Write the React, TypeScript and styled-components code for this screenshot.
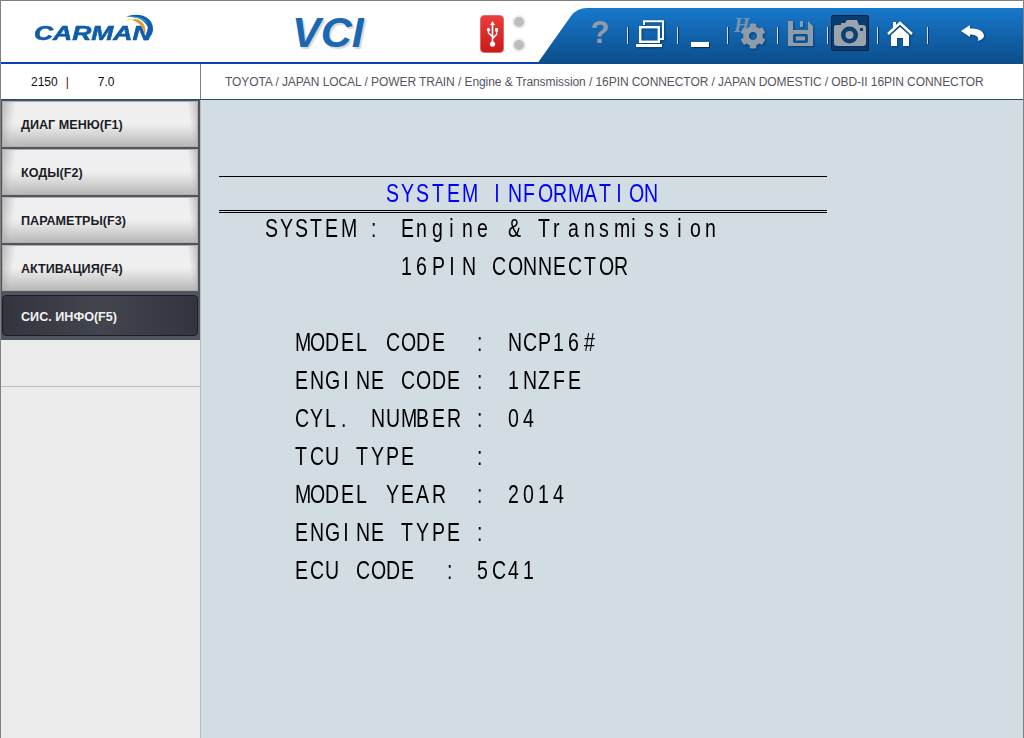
import styled, { createGlobalStyle } from "styled-components";
import { FaCog } from "react-icons/fa";

const GlobalStyle = createGlobalStyle`
  html, body {
    margin: 0;
    padding: 0;
    overflow: hidden;
    background: #fff;
  }
  * {
    box-sizing: border-box;
  }
`;

const Frame = styled.div`
  width: 1024px;
  height: 738px;
  display: flex;
  flex-direction: column;
  border-top: 1px solid #808080;
  border-left: 1px solid #808080;
  border-right: 1px solid #808080;
  font-family: "Liberation Sans", Arial, sans-serif;
`;

const Header = styled.header`
  height: 63px;
  flex: none;
  display: flex;
  align-items: stretch;
  background: #fff;
  border-bottom: 2px solid #0b3fb5;
`;

const Brand = styled.div`
  width: 199px;
  position: relative;
  padding: 23px 0 0 33px;
`;

const BrandName = styled.div`
  font-size: 21px;
  line-height: 17px;
  font-weight: 700;
  font-style: italic;
  color: #0f5cab;
  -webkit-text-stroke: 0.6px #0f5cab;
  transform: scaleX(1.26);
  transform-origin: left center;
`;

const BrandArc = styled.svg`
  position: absolute;
  left: 120px;
  top: 11px;
`;

const VciBox = styled.div`
  width: 280px;
  padding: 13px 0 0 92px;
`;

const VciName = styled.div`
  font-size: 43px;
  line-height: 36px;
  font-weight: 700;
  font-style: italic;
  color: #1a67b5;
  text-shadow: 2px 2px 1px #d8d8d8;
`;

const UsbGroup = styled.div`
  display: flex;
  align-items: center;
  gap: 8px;
  padding-top: 4px;
`;

const UsbBadge = styled.div`
  width: 24px;
  height: 38px;
  border-radius: 4px;
  display: flex;
  align-items: center;
  justify-content: center;
  border: 1px solid #e46a6a;
  background: linear-gradient(#ea3c3c, #cc1a1a);
`;

const Leds = styled.div`
  display: flex;
  flex-direction: column;
  gap: 9px;
`;

const Led = styled.span`
  width: 14px;
  height: 14px;
  border-radius: 50%;
  border: 2px solid #ececec;
  background: #bdbdbd;
`;

const Banner = styled.nav`
  width: 486px;
  height: 56px;
  margin-left: auto;
  align-self: flex-start;
  margin-top: 7px;
  padding: 7px 0 0 44px;
  display: flex;
  align-items: flex-start;
  background: linear-gradient(#1878cb, #0b4d8a);
  clip-path: path("M0 56 L34 8 Q40 0 50 0 H486 V56 Z");
`;

const ToolSlot = styled.div<{ $on?: boolean; $far?: boolean }>`
  width: 38px;
  height: 36px;
  flex: none;
  position: relative;
  display: flex;
  align-items: center;
  justify-content: center;
  margin-left: ${(p) => (p.$far ? "23px" : "0")};
  border-radius: 2px;
  background: ${(p) => (p.$on ? "#0c3b6e" : "transparent")};
  border: 1px solid ${(p) => (p.$on ? "#07233f" : "transparent")};

  svg {
    filter: drop-shadow(1px 1px 1px rgba(4, 40, 80, 0.6));
  }
`;

const ToolSep = styled.span`
  width: 1px;
  height: 17px;
  flex: none;
  margin: 12px 3px 0 8px;
  background: #d5dce2;
  box-shadow: 1px 0 0 #0a3560;
`;

const Question = styled.span`
  font-size: 31px;
  line-height: 36px;
  font-weight: 700;
  color: #8e9ba8;
`;

const MinimizeBar = styled.span`
  width: 18px;
  height: 5px;
  margin-top: 22px;
  background: #fff;
  box-shadow: 1px 1px 1px #06305a;
`;

const GearMark = styled.span`
  display: flex;
  margin: 5px 0 0 5px;
  color: #8e9ba8;
`;

const GearLetter = styled.span`
  position: absolute;
  left: 2px;
  top: 0;
  font-family: "Liberation Serif", serif;
  font-size: 20px;
  line-height: 18px;
  font-weight: 700;
  font-style: italic;
  color: #7a93ac;
`;

const SubBar = styled.div`
  height: 36px;
  flex: none;
  display: flex;
  background: #fff;
  border-bottom: 1px solid #1c4f7c;
`;

const VersionCell = styled.div`
  width: 200px;
  flex: none;
  display: flex;
  align-items: center;
  padding-left: 30px;
  font-size: 12px;
  color: #111;
  border-right: 1px solid #808080;
`;

const VersionBar = styled.span`
  margin: 0 29px 0 8px;
  color: #6b0000;
`;

const Breadcrumb = styled.div`
  padding-left: 24px;
  display: flex;
  align-items: center;
  font-size: 12px;
  letter-spacing: -0.07px;
  color: #555560;
  white-space: nowrap;
`;

const Body = styled.div`
  flex: 1;
  min-height: 0;
  display: flex;
`;

const Sidebar = styled.aside`
  width: 200px;
  flex: none;
  display: flex;
  flex-direction: column;
  background: #ebebeb;
  border-right: 1px solid #bcbcbc;
`;

const MenuGroup = styled.div`
  width: 199px;
  padding: 1px 0 4px 1px;
  display: flex;
  flex-direction: column;
  gap: 2px;
  background: #50545f;
`;

const MenuButton = styled.button<{ $active?: boolean }>`
  width: 196px;
  height: ${(p) => (p.$active ? "41px" : "46px")};
  margin-top: ${(p) => (p.$active ? "2px" : "0")};
  padding: 2px 0 0 18px;
  display: flex;
  align-items: center;
  font-family: inherit;
  font-size: 12.6px;
  font-weight: 700;
  text-align: left;
  color: ${(p) => (p.$active ? "#f2f2f2" : "#1c1c26")};
  border: 1px solid ${(p) => (p.$active ? "#1d1e24" : "#adadad")};
  border-radius: ${(p) => (p.$active ? "4px" : "0")};
  background: ${(p) =>
    p.$active
      ? "linear-gradient(90deg, #33343d, #43454e 50%, #33343d)"
      : "linear-gradient(100deg, rgba(150,150,150,0.55), rgba(150,150,150,0) 7%), linear-gradient(262deg, rgba(150,150,150,0.5), rgba(150,150,150,0) 5%), linear-gradient(#efefef 50%, #b9b9b9)"};
`;

const MenuSpacer = styled.div`
  height: 47px;
  width: 199px;
  flex: none;
  border-bottom: 1px solid #bcbcbc;
`;

const Screen = styled.main`
  flex: 1;
  background: #d2dce3;
  padding: 76px 0 0 18px;
`;

const ScreenPanel = styled.div`
  width: 608px;
`;

const TitleRow = styled.div`
  height: 37px;
  padding-bottom: 2px;
  display: flex;
  align-items: center;
  border-top: 1px solid #000;
  border-bottom: 3px double #000;
`;

const Lines = styled.div`
  display: flex;
  flex-direction: column;
  gap: 8px;
`;

const Line = styled.div<{ $blue?: boolean }>`
  height: 30px;
  flex: none;
  display: flex;
  align-items: center;
  color: ${(p) => (p.$blue ? "#0000ff" : "#000")};
`;

const Cell = styled.span<{ $thin?: boolean }>`
  width: 15.2px;
  height: 30px;
  flex: none;
  display: flex;
  align-items: center;
  padding-left: ${(p) => (p.$thin ? "3px" : "0")};
  font-size: 25px;
  line-height: 30px;
  white-space: pre;
  transform: scaleX(0.78);
  transform-origin: left center;
`;

const ScreenText = ({ text }: { text: string }) => (
  <>
    {text.split("").map((c, i) => (
      <Cell key={i} $thin={c === "I" || c === "i"}>
        {c}
      </Cell>
    ))}
  </>
);

const menu = [
  "ДИАГ МЕНЮ(F1)",
  "КОДЫ(F2)",
  "ПАРАМЕТРЫ(F3)",
  "АКТИВАЦИЯ(F4)",
  "СИС. ИНФО(F5)",
];

const screenLines = [
  "   SYSTEM : Engine & Transmission",
  "            16PIN CONNECTOR",
  "",
  "     MODEL CODE  : NCP16#",
  "     ENGINE CODE : 1NZFE",
  "     CYL. NUMBER : 04",
  "     TCU TYPE    :",
  "     MODEL YEAR  : 2014",
  "     ENGINE TYPE :",
  "     ECU CODE  : 5C41",
];

const UsbIcon = () => (
  <svg width="11" height="26" viewBox="0 0 11 26" fill="#fff">
    <path d="M5.500 0L8 4H6.300V15.500L9 13V10.500H8V7H11V10.500H10.300V13.800L6.300 18V20.500A2.700 2.700 0 1 1 4.700 20.500V16L.8 12.200V10.300A1.700 1.700 0 1 1 2.100 10.300V11.600L4.700 14V4H3Z" />
  </svg>
);

const WindowsIcon = () => (
  <svg width="28" height="27" viewBox="0 0 28 27" fill="none" stroke="#fff">
    <path d="M8 5V1.200H27V19H23.500" strokeWidth="2" />
    <rect x="4.200" y="7.200" width="18.600" height="14.600" strokeWidth="2.400" />
    <rect x="0" y="24" width="26" height="3" fill="#fff" stroke="none" />
  </svg>
);

const SaveIcon = () => (
  <svg width="25" height="25" viewBox="0 0 25 25">
    <path
      fill="#8e9ba8"
      fillRule="evenodd"
      d="M0 0H20L25 5V25H0ZM5 0V9H20V0H15V6H12V0ZM7 13A2 2 0 0 0 5 15V20A2 2 0 0 0 7 22H18A2 2 0 0 0 20 20V15A2 2 0 0 0 18 13ZM8 15.500H17V19.500H8Z"
    />
  </svg>
);

const CameraIcon = () => (
  <svg width="32" height="26" viewBox="0 0 32 26">
    <path
      fill="#99a4ac"
      d="M2 5H7V3H11L13 0H23L25 5H29A3 3 0 0 1 32 8V23A3 3 0 0 1 29 26H3A3 3 0 0 1 0 23V7A2 2 0 0 1 2 5Z"
    />
    <circle cx="15.500" cy="15" r="8.500" fill="#0d4072" />
    <circle cx="15.500" cy="15" r="4" fill="#99a4ac" />
    <rect x="26" y="8" width="3" height="3" fill="#0d4072" />
  </svg>
);

const HomeIcon = () => (
  <svg width="26" height="25" viewBox="0 0 26 25">
    <path fill="none" stroke="#fff" strokeWidth="2.400" d="M1 13L13 2L25 13" />
    <path fill="#fff" d="M6 1H9V5L6 8ZM13 6L22 14V25H16V17H10V25H4V14Z" />
  </svg>
);

const BackIcon = () => (
  <svg width="24" height="18" viewBox="0 0 24 18">
    <path
      fill="#fff"
      d="M0 7L9 1V4.500C17 4 23 7 23 12C23 14 20 16 17 17C18 14 17 11 9 10.500V13Z"
    />
  </svg>
);

const Tools = () => (
  <Banner>
    <ToolSlot>
      <Question>?</Question>
    </ToolSlot>
    <ToolSep />
    <ToolSlot>
      <WindowsIcon />
    </ToolSlot>
    <ToolSep />
    <ToolSlot>
      <MinimizeBar />
    </ToolSlot>
    <ToolSep />
    <ToolSlot>
      <GearLetter>H</GearLetter>
      <GearMark>
        <FaCog size={26} />
      </GearMark>
    </ToolSlot>
    <ToolSep />
    <ToolSlot>
      <SaveIcon />
    </ToolSlot>
    <ToolSep />
    <ToolSlot $on>
      <CameraIcon />
    </ToolSlot>
    <ToolSep />
    <ToolSlot>
      <HomeIcon />
    </ToolSlot>
    <ToolSep />
    <ToolSlot $far>
      <BackIcon />
    </ToolSlot>
  </Banner>
);

const App = () => (
  <Frame>
    <GlobalStyle />
    <Header>
      <Brand>
        <BrandName>CARMAN</BrandName>
        <BrandArc width="34" height="30" viewBox="0 0 34 30">
          <path fill="#0f5fae" d="M5 5C15 0 32 3 32 17C32 22 29 26 24 29C28 22 29 16 24 11C20 6 12 4 5 5Z" />
          <path fill="#3fa5b8" d="M8 5C16 3 24 6 27 12C22 7 15 5 8 5Z" />
          <path fill="#e09a35" d="M14 7C22 8 26 14 24 24C23 17 20 11 11 8Z" />
          <path fill="#f2e640" d="M3 10C8 6 12 6 16 7C11 7 7 8 3 10Z" />
        </BrandArc>
      </Brand>
      <VciBox>
        <VciName>VCI</VciName>
      </VciBox>
      <UsbGroup>
        <UsbBadge>
          <UsbIcon />
        </UsbBadge>
        <Leds>
          <Led />
          <Led />
        </Leds>
      </UsbGroup>
      <Tools />
    </Header>
    <SubBar>
      <VersionCell>
        2150
        <VersionBar>|</VersionBar>
        7.0
      </VersionCell>
      <Breadcrumb>
        TOYOTA / JAPAN LOCAL / POWER TRAIN / Engine &amp; Transmission / 16PIN CONNECTOR / JAPAN DOMESTIC / OBD-II 16PIN CONNECTOR
      </Breadcrumb>
    </SubBar>
    <Body>
      <Sidebar>
        <MenuGroup>
          {menu.map((label, i) => (
            <MenuButton key={label} $active={i === 4}>
              {label}
            </MenuButton>
          ))}
        </MenuGroup>
        <MenuSpacer />
      </Sidebar>
      <Screen>
        <ScreenPanel>
          <TitleRow>
            <Line $blue>
              <ScreenText text="           SYSTEM INFORMATION" />
            </Line>
          </TitleRow>
          <Lines>
            {screenLines.map((text, i) => (
              <Line key={i}>
                <ScreenText text={text} />
              </Line>
            ))}
          </Lines>
        </ScreenPanel>
      </Screen>
    </Body>
  </Frame>
);

export default App;
